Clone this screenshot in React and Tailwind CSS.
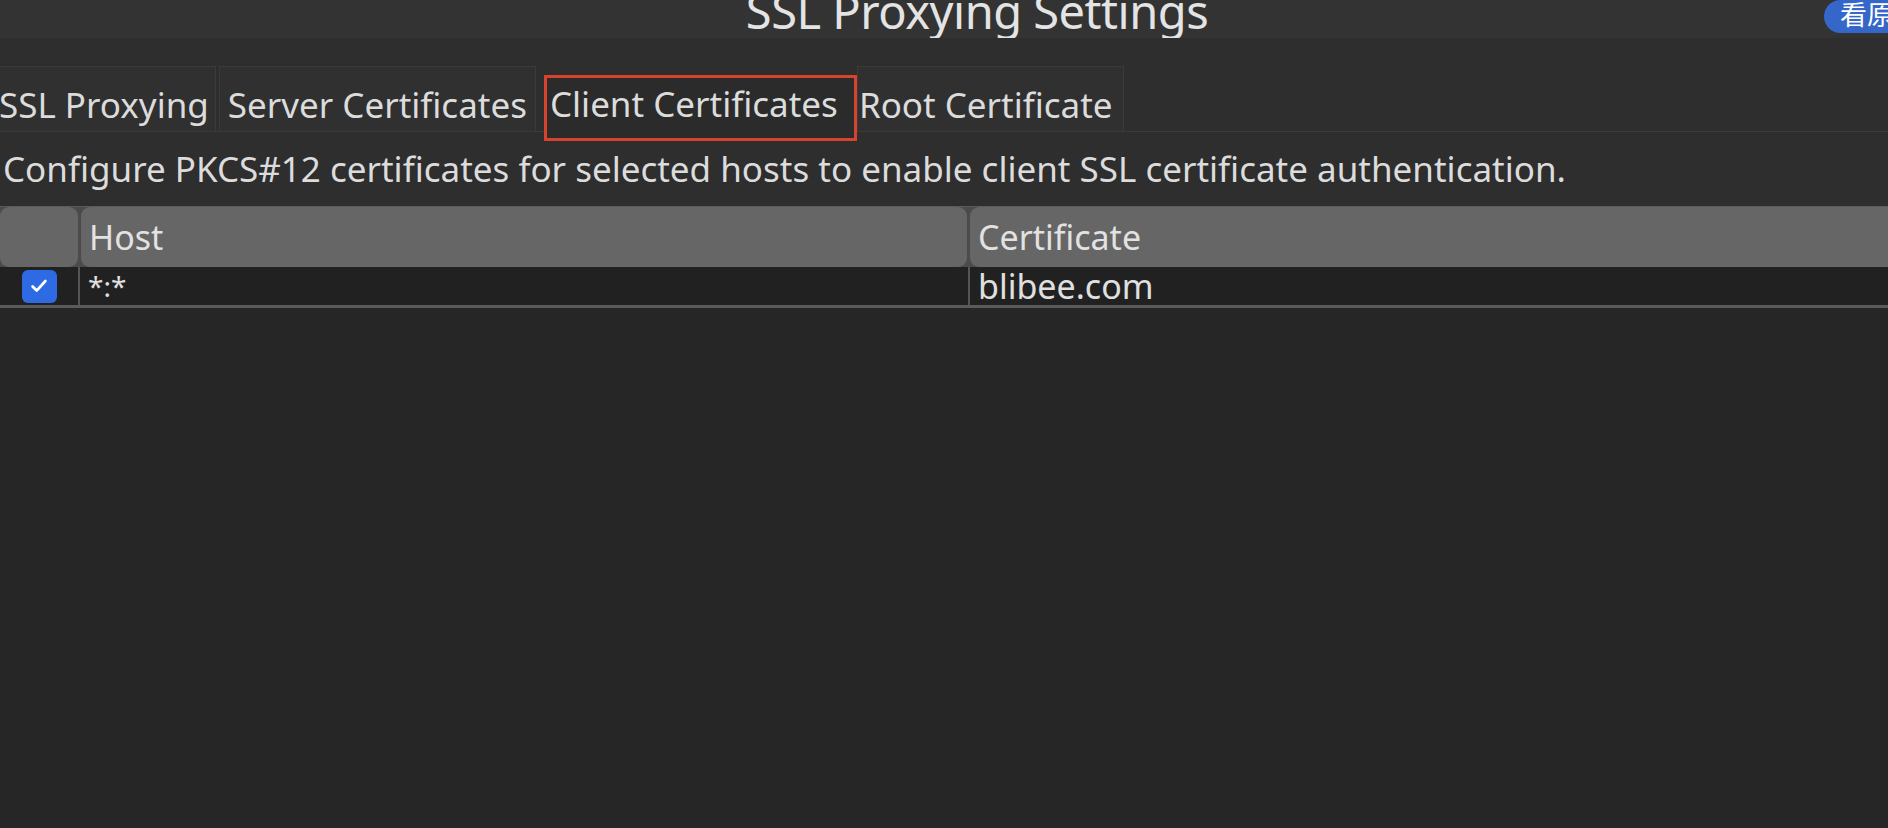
import React from 'react';

const font = { fontFamily: '"Noto Sans", "Noto Sans CJK SC", sans-serif' };

const Check = () => (
  <svg viewBox="0 0 24 24" className="w-[22px] h-[22px]" fill="none" stroke="white" strokeWidth="3" strokeLinecap="round" strokeLinejoin="round">
    <path d="M5 12.5l4.5 4.5L19 6.5" />
  </svg>
);

const tabs = ['SSL Proxying', 'Server Certificates', 'Client Certificates', 'Root Certificate'];

const tabClass = [
  'flex items-center pt-[12px] px-[6px] mr-[3px] border border-[#3a3a3a] border-b-0 bg-[#303030]',
  'flex items-center pt-[12px] px-[8px] mr-[8px] border border-[#3a3a3a] border-b-0 bg-[#303030]',
  'flex items-center pl-[3px] pr-[16px] border-[3px] border-[#d8432e] mt-[9px] -mb-[10px] pb-[8px] bg-[#2b2b2b]',
  'flex items-center pt-[12px] pl-[1px] pr-[10px] border border-[#3a3a3a] border-b-0 bg-[#303030]',
];

const App = () => {
  return (
    <div className="w-[1888px] h-[828px] flex flex-col bg-[#2e2e2e] text-[#dcdcdc] overflow-hidden" style={font}>
      {/* Title bar */}
      <div className="relative h-[38px] shrink-0 bg-[#333333] overflow-hidden flex justify-center">
        <div className="pl-[66px] -mt-[21px] text-[47px] leading-[64px] text-[#e4e4e4] tracking-[-0.5px] whitespace-nowrap">SSL Proxying Settings</div>
        <div className="absolute right-0 top-0 h-[33px] w-[64px] rounded-l-full bg-[#3467c9] text-white text-[27px] leading-[30px] pl-[16px] whitespace-nowrap overflow-hidden">
          看原图
        </div>
      </div>

      {/* Tabs */}
      <div className="h-[28px] shrink-0" />
      <div className="h-[66px] shrink-0 flex items-stretch border-b border-[#3a3a3a] -ml-[8px] text-[35px] whitespace-nowrap">
        {tabs.map((t, i) => (
          <div key={t} className={tabClass[i]}>
            {t}
          </div>
        ))}
      </div>

      {/* Description */}
      <div className="h-[74px] shrink-0 flex items-center pl-[3px] text-[35px] whitespace-nowrap">
        Configure PKCS#12 certificates for selected hosts to enable client SSL certificate authentication.
      </div>

      {/* Table */}
      <div className="flex-1 flex flex-col bg-[#262626]">
        <div className="h-[61px] shrink-0 flex gap-[3px] bg-[#4b4b4b] border-t border-[#5a5a5a] text-[34px] text-[#e2e2e2]">
          <div className="w-[78px] shrink-0 rounded-[9px] bg-[#666666]" />
          <div className="w-[886px] shrink-0 rounded-[9px] bg-[#666666] flex items-center pl-[8px]">Host</div>
          <div className="flex-1 rounded-l-[9px] bg-[#666666] flex items-center pl-[8px]">Certificate</div>
        </div>
        <div className="h-[38px] shrink-0 flex bg-[#212121] text-[34px] text-[#e0e0e0]">
          <div className="w-[80px] shrink-0 flex items-center justify-center border-r-2 border-[#555555]">
            <div className="w-[35px] h-[33px] rounded-[6px] bg-[#2e6ae3] flex items-center justify-center">
              <Check />
            </div>
          </div>
          <div className="w-[888px] shrink-0 flex items-center pl-[8px] leading-none text-[28px]">*:*</div>
          <div className="flex-1 flex items-center pl-[8px] border-l-2 border-[#555555] leading-none">blibee.com</div>
        </div>
        <div className="h-[3px] shrink-0 bg-[#5a5a5a]" />
        <div className="flex-1" />
      </div>
    </div>
  );
};

export default App;
